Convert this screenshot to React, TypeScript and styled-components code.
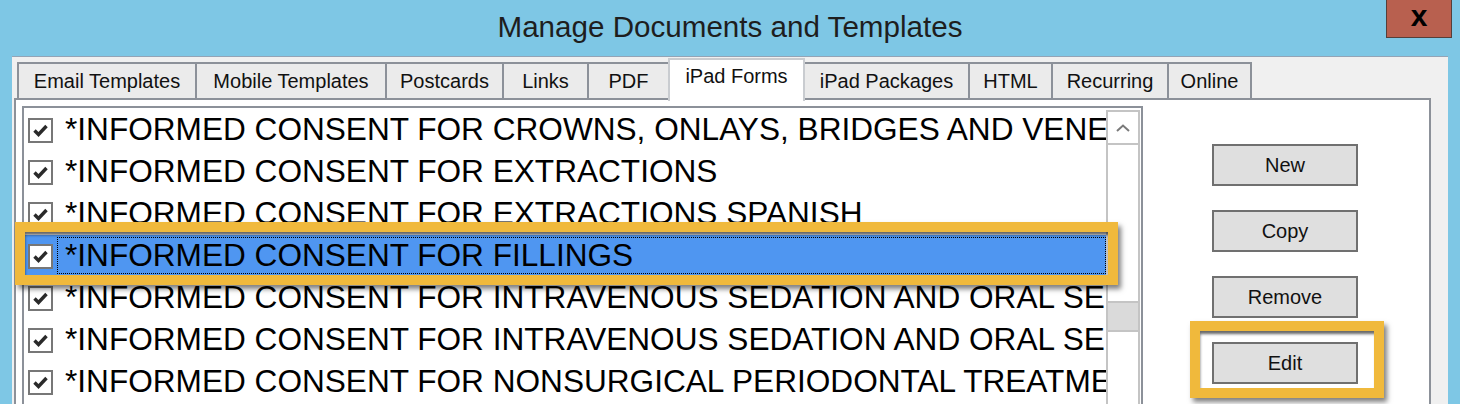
import React from 'react'
import styled, { createGlobalStyle, css } from 'styled-components'

const GlobalStyle = createGlobalStyle`
    html, body {
        margin: 0;
        padding: 0;
    }
    body {
        background: #7ec7e5;
        font-family: "Liberation Sans", Arial, sans-serif;
        width: 1460px;
        height: 404px;
        overflow: hidden;
    }
`

const Screen = styled.div`
    position: relative;
    width: 1460px;
    height: 404px;
    overflow: hidden;
    display: flex;
    flex-direction: column;
`

const TitleBar = styled.div`
    height: 56px;
    display: grid;
    grid-template-columns: 1fr auto 1fr;
    align-items: start;
`

const Title = styled.h1`
    grid-column: 2;
    margin: 0;
    padding-top: 10px;
    font-weight: normal;
    font-size: 29.6px;
    line-height: 34px;
    color: #1e1e1e;
    white-space: nowrap;
`

const CloseButton = styled.div`
    justify-self: end;
    margin-right: 8px;
    width: 66px;
    height: 38px;
    background: #b8604f;
    border: 1px solid #553f3a;
    border-top: none;
    display: flex;
    align-items: center;
    justify-content: center;
    font-weight: bold;
    font-size: 30px;
    line-height: 1;
    color: #000;
    padding-bottom: 6px;
    box-sizing: border-box;
`

const Dialog = styled.div`
    flex: 1;
    margin: 0 12px;
    background: #f0f0f0;
    border-top: 1px solid #93a4b6;
    padding: 1px 0 0 2px;
    display: flex;
    flex-direction: column;
    min-height: 0;
`

const TabStrip = styled.div`
    height: 40px;
    display: flex;
    align-items: flex-end;
    padding-left: 3px;
    position: relative;
    z-index: 1;
`

const Tab = styled.div<{ $w: number; $active?: boolean }>`
    box-sizing: border-box;
    width: ${p => p.$w}px;
    height: 36px;
    margin-right: -2px;
    border: 2px solid #8c9199;
    border-bottom: none;
    background: #ebebeb;
    display: flex;
    align-items: center;
    justify-content: center;
    font-size: 20px;
    color: #111;
    white-space: nowrap;

    ${p => p.$active && css`
        height: 43px;
        margin-bottom: -3px;
        background: #fff;
        border-color: #c9ccd0;
        position: relative;
        z-index: 2;
        padding-bottom: 8px;
    `}
`

const TabPanel = styled.div`
    box-sizing: border-box;
    flex: 1;
    width: 1417px;
    min-height: 0;
    background: #fff;
    border: 2px solid #8c9199;
    border-bottom: none;
    padding: 6px 0 0 6px;
    display: flex;
    align-items: stretch;
`

const ListBox = styled.div`
    box-sizing: border-box;
    width: 1121px;
    border: 2px solid #8c9199;
    border-bottom: none;
    display: flex;
    overflow: hidden;
`

const Rows = styled.div`
    flex: 1;
    min-width: 0;
    padding-top: 1px;
    display: flex;
    flex-direction: column;
`

const Row = styled.div<{ $selected?: boolean }>`
    height: 42px;
    flex-shrink: 0;
    display: flex;
    align-items: center;
    padding-left: 4px;
    gap: 4px;
    background: ${p => (p.$selected ? '#4f96f1' : 'transparent')};
`

const Check = styled.div`
    box-sizing: border-box;
    width: 25px;
    height: 25px;
    flex-shrink: 0;
    border: 2px solid #777;
    background: #fff;
    display: flex;
    align-items: center;
    justify-content: center;
`

const Label = styled.div<{ $focused?: boolean }>`
    flex: 1;
    min-width: 0;
    align-self: stretch;
    margin: 2px 0 3px;
    padding-left: 8px;
    display: flex;
    align-items: center;
    font-size: 31.6px;
    line-height: 1;
    color: #000;
    white-space: nowrap;
    overflow: hidden;
    outline: ${p => (p.$focused ? '1px dotted #000' : 'none')};
    outline-offset: -1px;
`

const ScrollBar = styled.div`
    box-sizing: border-box;
    width: 34px;
    margin: 2px 1px 0 0;
    border: 2px solid #c4c4c4;
    border-bottom: none;
    display: flex;
    flex-direction: column;
`

const ArrowButton = styled.div`
    height: 31px;
    border-bottom: 2px solid #c4c4c4;
    display: flex;
    align-items: center;
    justify-content: center;
`

const Thumb = styled.div`
    margin-top: 156px;
    height: 31px;
    background: #dadada;
    border-top: 2px solid #c4c4c4;
    border-bottom: 2px solid #c4c4c4;
    box-sizing: border-box;
`

const ButtonColumn = styled.div`
    margin-left: 69px;
    padding-top: 38px;
    display: flex;
    flex-direction: column;
    gap: 24px;
`

const Button = styled.div`
    box-sizing: border-box;
    width: 146px;
    height: 42px;
    border: 2px solid #707070;
    background: #dfdfdf;
    display: flex;
    align-items: center;
    justify-content: center;
    font-size: 20px;
    color: #111;
`

const highlight = css`
    position: absolute;
    box-sizing: border-box;
    border: 10px solid #f0b93c;
    box-shadow: 3px 4px 5px rgba(0, 0, 0, 0.5), inset 1px 4px 3px -1px rgba(0, 0, 0, 0.6);
    pointer-events: none;
`

const RowHighlight = styled.div`
    ${highlight}
    left: 15px;
    top: 222px;
    width: 1103px;
    height: 63px;
`

const ButtonHighlight = styled.div`
    ${highlight}
    left: 1190px;
    top: 321px;
    width: 194px;
    height: 77px;
`

const tabs = [
    { label: 'Email Templates', w: 180 },
    { label: 'Mobile Templates', w: 192 },
    { label: 'Postcards', w: 119 },
    { label: 'Links', w: 87 },
    { label: 'PDF', w: 83 },
    { label: 'iPad Forms', w: 137, active: true },
    { label: 'iPad Packages', w: 167 },
    { label: 'HTML', w: 85 },
    { label: 'Recurring', w: 118 },
    { label: 'Online', w: 85 },
]

const forms = [
    '*INFORMED CONSENT FOR CROWNS, ONLAYS, BRIDGES AND VENEERS',
    '*INFORMED CONSENT FOR EXTRACTIONS',
    '*INFORMED CONSENT FOR EXTRACTIONS SPANISH',
    '*INFORMED CONSENT FOR FILLINGS',
    '*INFORMED CONSENT FOR INTRAVENOUS SEDATION AND ORAL SEDATION',
    '*INFORMED CONSENT FOR INTRAVENOUS SEDATION AND ORAL SEDATION SPANISH',
    '*INFORMED CONSENT FOR NONSURGICAL PERIODONTAL TREATMENT',
]

const CheckMark = () => (
    <svg width="19" height="19" viewBox="0 0 19 19">
        <path d="M3.5 9.5 L7.5 13.5 L15.5 5" fill="none" stroke="#2a2a2a" strokeWidth="3.4" />
    </svg>
)

const Chevron = () => (
    <svg width="14" height="8" viewBox="0 0 14 8">
        <path d="M1 7 L7 1.5 L13 7" fill="none" stroke="#7a7a7a" strokeWidth="2" />
    </svg>
)

export default function App() {
    const selected = 3

    return (
        <>
            <GlobalStyle />
            <Screen>
                <TitleBar>
                    <Title>Manage Documents and Templates</Title>
                    <CloseButton>x</CloseButton>
                </TitleBar>
                <Dialog>
                    <TabStrip>
                        {tabs.map(t => (
                            <Tab key={t.label} $w={t.w} $active={t.active}>{t.label}</Tab>
                        ))}
                    </TabStrip>
                    <TabPanel>
                        <ListBox>
                            <Rows>
                                {forms.map((f, i) => (
                                    <Row key={i} $selected={i === selected}>
                                        <Check><CheckMark /></Check>
                                        <Label $focused={i === selected}>{f}</Label>
                                    </Row>
                                ))}
                            </Rows>
                            <ScrollBar>
                                <ArrowButton><Chevron /></ArrowButton>
                                <Thumb />
                            </ScrollBar>
                        </ListBox>
                        <ButtonColumn>
                            <Button>New</Button>
                            <Button>Copy</Button>
                            <Button>Remove</Button>
                            <Button>Edit</Button>
                        </ButtonColumn>
                    </TabPanel>
                </Dialog>
                <RowHighlight />
                <ButtonHighlight />
            </Screen>
        </>
    )
}
